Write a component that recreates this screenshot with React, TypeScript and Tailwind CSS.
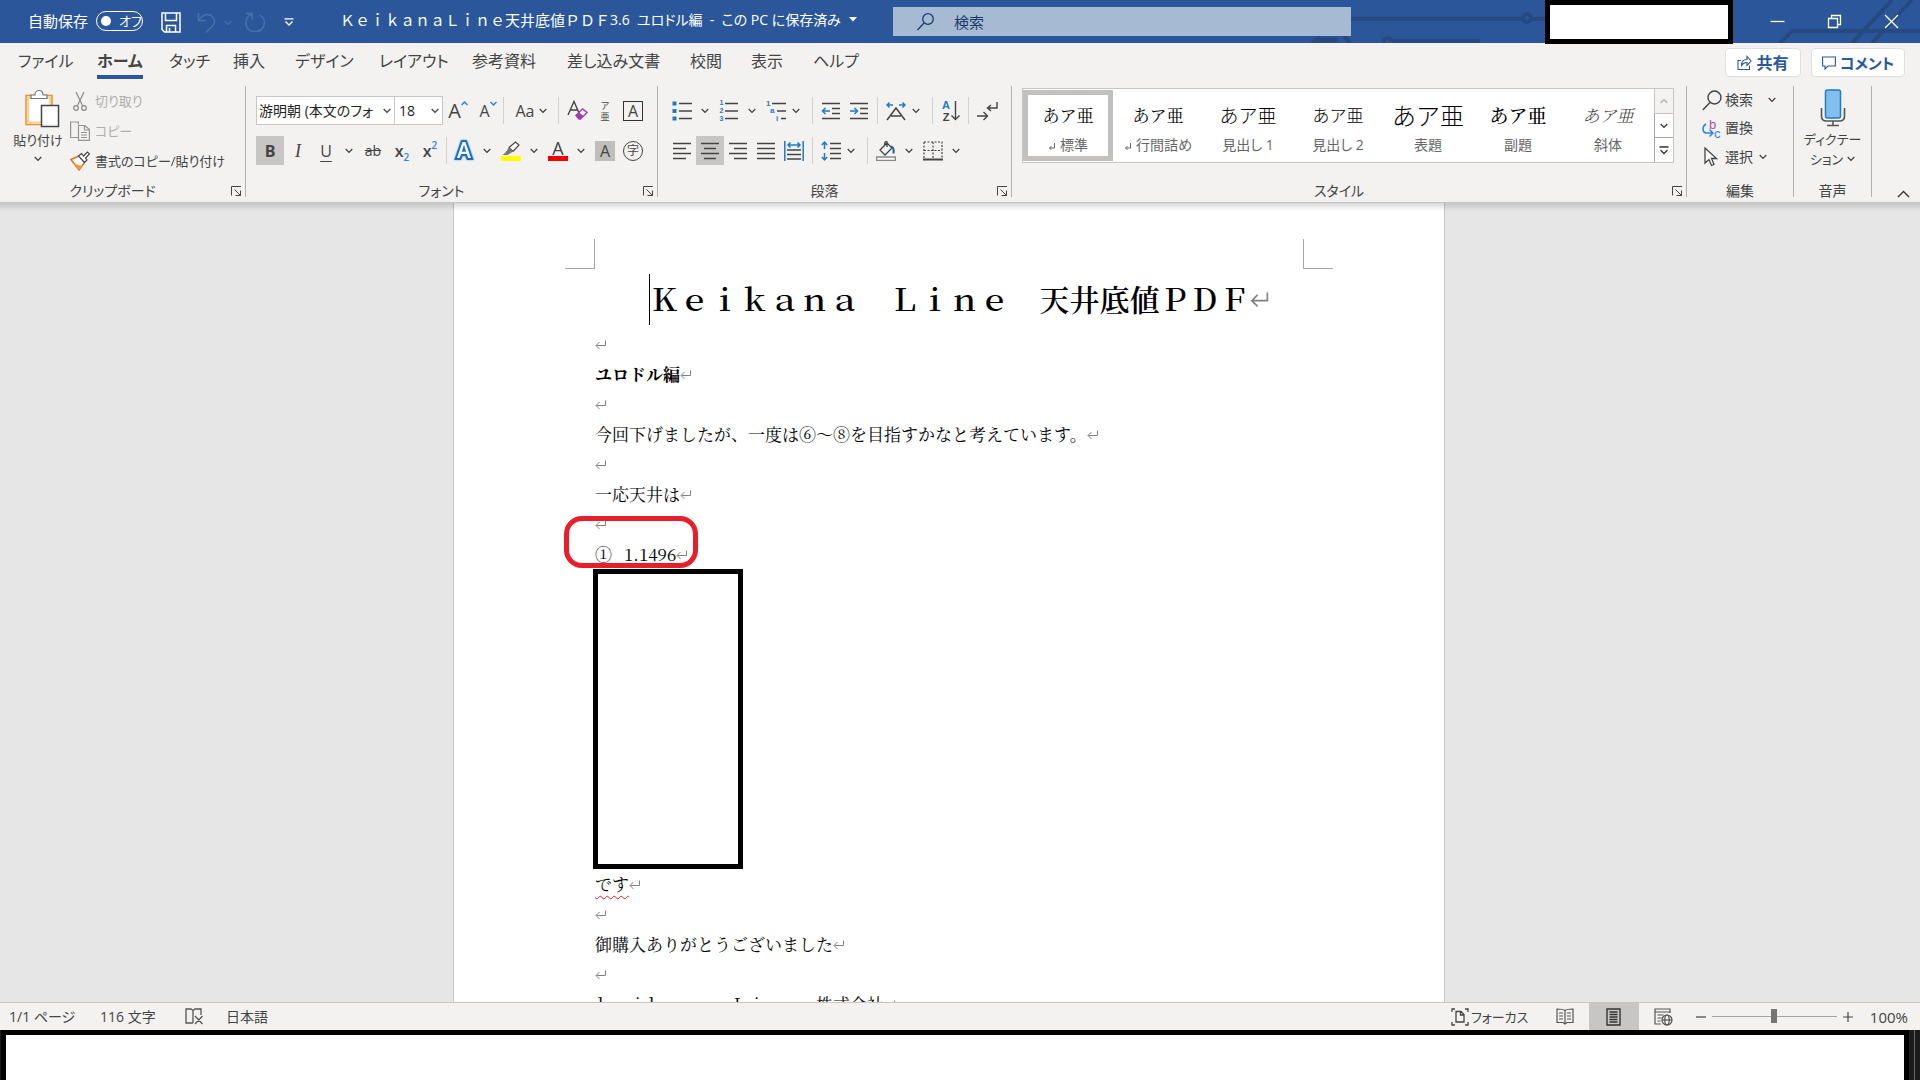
import React, { useState } from 'react';

const ui = "font-['Open_Sans','Noto_Sans_CJK_JP',sans-serif] [font-feature-settings:'palt']";
const mincho = "font-['Noto_Serif_CJK_JP','Liberation_Serif','Noto_Sans_CJK_JP',serif] [font-feature-settings:normal]";
const gothic = "font-['Noto_Sans_CJK_JP',sans-serif] [font-feature-settings:normal]";

const TABS = [
  { name: 'ファイル', width: 'w-[79px]' },
  { name: 'ホーム', width: 'w-[72px]' },
  { name: 'タッチ', width: 'w-[64px]' },
  { name: '挿入', width: 'w-[62px]' },
  { name: 'デザイン', width: 'w-[84px]' },
  { name: 'レイアウト', width: 'w-[93px]' },
  { name: '参考資料', width: 'w-[95px]' },
  { name: '差し込み文書', width: 'w-[123px]' },
  { name: '校閲', width: 'w-[61px]' },
  { name: '表示', width: 'w-[62px]' },
  { name: 'ヘルプ', width: 'w-[60px]' },
];

const STYLES = [
  { name: '標準', mark: true, sample: 'text-[17px] font-normal text-black', family: mincho },
  { name: '行間詰め', mark: true, sample: 'text-[17px] font-normal text-black', family: mincho },
  { name: '見出し 1', mark: false, sample: 'text-[19px] font-light text-black', family: gothic },
  { name: '見出し 2', mark: false, sample: 'text-[17px] font-light text-black', family: gothic },
  { name: '表題', mark: false, sample: 'text-2xl font-light text-black', family: gothic },
  { name: '副題', mark: false, sample: 'text-[19px] font-medium text-black', family: mincho },
  { name: '斜体', mark: false, sample: 'text-[17px] font-light italic text-[#404040]', family: mincho },
];

type BtnProps = { label: string; className?: string; active?: boolean; children: React.ReactNode };

function Btn({ label, className = 'w-7', active, children }: BtnProps) {
  return (
    <button
      type="button"
      aria-label={label}
      className={`h-[29px] shrink-0 flex items-center justify-center ${className} ${active ? 'bg-[#c8c6c4]' : 'hover:bg-[#e1dfdd]'}`}
    >
      {children}
    </button>
  );
}

function Chevron({ className = '' }: { className?: string }) {
  return (
    <svg className={`shrink-0 ${className}`} width="8" height="6" viewBox="0 0 8 6" fill="none" stroke="currentColor" strokeWidth="1.3">
      <path d="M.7 1 4 4.4 7.3 1" />
    </svg>
  );
}

function Drop({ label, className = 'w-[17px] mr-[2px]' }: { label: string; className?: string }) {
  return (
    <Btn label={label} className={className}>
      <Chevron />
    </Btn>
  );
}

function Sep({ className = 'mx-1' }: { className?: string }) {
  return <span className={`w-px h-[27px] shrink-0 bg-[#d2d0ce] ${className}`} />;
}

function Group({ name, width, launcher, children }: { name: string; width: string; launcher?: boolean; children: React.ReactNode }) {
  return (
    <>
      <section aria-label={name} className={`h-[116px] shrink-0 flex flex-col ${width}`}>
        <div className="flex-1 min-h-0">{children}</div>
        <div className="h-[22px] flex items-center">
          <span className="flex-1 text-center text-sm leading-5">{name}</span>
          {launcher && (
            <button type="button" aria-label={`${name}の設定`} className="w-5 h-5 flex items-center justify-start pl-[6px]">
              <svg width="11" height="11" viewBox="0 0 11 11" fill="none" stroke="#444" strokeWidth="1">
                <path d="M.5 9.500V.5H10M3.500 3.500 9.500 9.500M9.500 4.500v5h-5" />
              </svg>
            </button>
          )}
        </div>
      </section>
      <span className="w-px h-[111px] shrink-0 bg-[#b3b0ad]" />
    </>
  );
}

// 段落記号
function Mark({ big }: { big?: boolean }) {
  return (
    <svg className="shrink-0" width={big ? 20 : 12} height={big ? 18 : 11} viewBox="0 0 12 11" fill="none" stroke="#808080" strokeWidth="1">
      <path d="M10.500 1.500v5H1.500M4.500 3 1 6.500 4.500 10" />
    </svg>
  );
}

function Line({ children }: { children?: React.ReactNode }) {
  return (
    <p className="h-[30px] flex items-center whitespace-nowrap">
      {children}
      <Mark />
    </p>
  );
}

function Lines({ rows }: { rows: [number, number][] }) {
  return (
    <svg width="20" height="20" viewBox="0 0 20 20" stroke="#444" strokeWidth="1.500">
      {rows.map(([a, b], i) => (
        <path key={i} d={`M${a} ${2.5 + i * 5}H${b}`} />
      ))}
    </svg>
  );
}

function TitleBar() {
  const [autoSave, setAutoSave] = useState(false);

  return (
    <header className="relative h-[43px] shrink-0 flex items-center bg-[#2b579a] text-white">
      {/* 背景の回路模様 */}
      <svg className="absolute right-0 top-0" width="620" height="43" viewBox="0 0 620 43" fill="none" stroke="#26497f" strokeWidth="4">
        <path d="M50 19H222M232 19H260M92 41H180M12 43 20 37M50 43 44 36" />
        <circle cx="227" cy="18" r="4" />
        <path d="M14 40h24" strokeWidth="5" />
        <path d="M84 43c-2-6 6-6 8-2M480 43 492 31H620M552 43 592 0M572 43 612 0" />
      </svg>

      <div className="relative w-[340px] shrink-0 flex items-center pb-[2px] pl-7">
        <label className="flex items-center gap-2 text-[15px] leading-5 cursor-pointer">
          <span className="w-[60px] whitespace-nowrap">自動保存</span>
          <input type="checkbox" className="sr-only" checked={autoSave} onChange={() => setAutoSave(!autoSave)} />
          <span className="w-[47px] h-5 rounded-full border border-white flex items-center gap-2 pl-1 text-[13px] leading-4">
            <span className="w-[10px] h-[10px] rounded-full bg-white" />
            オフ
          </span>
        </label>
        <button type="button" aria-label="上書き保存" className="ml-[18px] mt-1">
          <svg width="20" height="21" viewBox="0 0 20 21" fill="none" stroke="#fff" strokeWidth="1.500">
            <path d="M1 1h18v19H3.500L1 17.500zM4.500 1v7.500h11V1M5.500 20v-6.500h9V20M8.500 16v4" />
          </svg>
        </button>
        <button type="button" aria-label="元に戻す" className="ml-4 mt-1 flex items-center gap-2 text-[#4a70ab]">
          <svg width="19" height="21" viewBox="0 0 19 21" fill="none" stroke="currentColor" strokeWidth="1.500">
            <path d="M1.500 1v7.500H9M1.500 8.500C5 3 10 1 14 3.500c5 3.500 4 8 1 11L9 20.500" />
          </svg>
          <Chevron />
        </button>
        <button type="button" aria-label="やり直し" className="ml-3 mt-1 text-[#4a70ab]">
          <svg width="22" height="21" viewBox="0 0 22 21" fill="none" stroke="currentColor" strokeWidth="1.500">
            <path d="M2 1.500h6v6M7.500 2C-1 6 0 19.500 11 19.500c10.500 0 12.500-12.500 4.500-16.500" />
          </svg>
        </button>
        <button type="button" aria-label="クイック アクセス ツール バーのユーザー設定" className="ml-[18px] mt-[2px]">
          <svg width="10" height="8" viewBox="0 0 10 8" fill="none" stroke="#fff" strokeWidth="1.300">
            <path d="M.5.8h9M1.500 3.500 5 7l3.500-3.500" />
          </svg>
        </button>
      </div>

      <button type="button" className="relative w-[553px] shrink-0 flex items-center gap-2 pb-1 text-[15px] leading-5 whitespace-nowrap">
        <span className="flex items-center">
          <span className="[font-feature-settings:normal]">ＫｅｉｋａｎａＬｉｎｅ天井底値ＰＤＦ</span>
          <span className="text-sm leading-5">3.6&nbsp; ユロドル編 &nbsp;-&nbsp; この PC に保存済み</span>
        </span>
        <svg width="8" height="5" viewBox="0 0 8 5" fill="#fff"><path d="M0 0h8L4 4.500z" /></svg>
      </button>

      <label className="relative w-[458px] h-[29px] flex items-center bg-[#a6bad4] pl-6 gap-5 text-[#1e3a6b]">
        <svg width="17" height="18" viewBox="0 0 17 18" fill="none" stroke="currentColor" strokeWidth="1.300">
          <circle cx="11" cy="6" r="5.300" />
          <path d="M7 10 .5 17" />
        </svg>
        <input type="search" aria-label="検索" placeholder="検索" className="flex-1 min-w-0 bg-transparent text-[15px] leading-5 outline-none placeholder:text-[#1e3a6b] placeholder:opacity-100" />
      </label>

      <div className="relative ml-auto h-full flex items-center">
        <div className="w-[188px] h-[44px] mr-4 self-start bg-white border-[5px] border-black" />
        <Win label="最小化"><path d="M.5 7.500h14" /></Win>
        <Win label="元に戻す (縮小)"><path d="M1.500 4.500h9v9h-9zM4.500 4V1.500h9v9H11" /></Win>
        <Win label="閉じる"><path d="m1 1 13 13M14 1 1 14" /></Win>
      </div>
    </header>
  );
}

function Win({ label, children }: { label: string; children: React.ReactNode }) {
  return (
    <button type="button" aria-label={label} className="w-[57px] h-[43px] flex items-center justify-center">
      <svg width="15" height="15" viewBox="0 0 15 15" fill="none" stroke="#fff" strokeWidth="1.300">{children}</svg>
    </button>
  );
}

function Tabs() {
  return (
    <nav className="h-[43px] shrink-0 flex items-start pl-[18px] pr-[15px]">
      <div className="flex text-base leading-6 text-[#444]">
        {TABS.map((t) => (
          <div key={t.name} className={t.width}>
            <button
              type="button"
              className={`mt-1 h-8 whitespace-nowrap border-b-4 ${t.name === 'ホーム' ? 'font-bold border-[#2b579a]' : 'border-transparent'}`}
            >
              {t.name}
            </button>
          </div>
        ))}
      </div>
      <div className="ml-auto mt-[5px] flex gap-[10px] text-base leading-5 font-bold text-[#2b579a]">
        <button type="button" className="h-[29px] w-[76px] flex items-center justify-center gap-1 bg-white border border-[#e1dfdd] rounded-sm">
          <svg width="15" height="15" viewBox="0 0 15 15" fill="none" stroke="currentColor" strokeWidth="1.100">
            <path d="M4 5.500H1v9h11.500v-4M4.500 10.500c0-4 2-6 5.500-6V1.500l4 4.500-4 4.500v-3c-3 0-4 .5-5.500 3z" />
          </svg>
          共有
        </button>
        <button type="button" className="h-[29px] w-[94px] flex items-center justify-center gap-1 bg-white border border-[#e1dfdd] rounded-sm text-[15px] whitespace-nowrap">
          <svg className="shrink-0" width="14" height="14" viewBox="0 0 14 14" fill="none" stroke="currentColor" strokeWidth="1.100">
            <path d="M.6 1h12.800v9H6l-3 3v-3H.6z" />
          </svg>
          コメント
        </button>
      </div>
    </nav>
  );
}

function Clipboard() {
  return (
    <Group name="クリップボード" width="w-[245px]" launcher>
      <div className="flex pl-[10px]">
        <button type="button" className="w-[56px] flex flex-col items-center pt-[3px] text-[13px] leading-5 whitespace-nowrap">
          <svg className="ml-[7px]" width="36" height="39" viewBox="0 0 36 39" fill="none">
            <path d="M2 6.500h26v29H2z" fill="#fff" stroke="#e8912d" strokeWidth="1.500" />
            <path d="M4 8.500h22v25H4z" stroke="#fbd38f" strokeWidth="2" />
            <path d="M7 9.500V6h4c0-6 8-6 8 0h4v3.500z" fill="#fff" stroke="#777" strokeWidth="1.200" />
            <path d="M17.500 16.500h17v21h-17z" fill="#fff" stroke="#444" strokeWidth="1.500" />
          </svg>
          <span className="mt-[2px]">貼り付け</span>
          <Chevron className="mt-[6px]" />
        </button>
        <div className="flex flex-col text-[13px] leading-5 pl-1">
          <button type="button" disabled className="h-[30px] flex items-center gap-[5px] text-[#b1afad]">
            <svg width="20" height="20" viewBox="0 0 20 20" fill="none" stroke="#8a8886" strokeWidth="1.200">
              <path d="M6 1l6.500 13.500M14 1 7.500 14.500" />
              <circle cx="6" cy="17" r="2.300" /><circle cx="14" cy="17" r="2.300" />
            </svg>
            切り取り
          </button>
          <button type="button" disabled className="h-[30px] flex items-center gap-[5px] text-[#b1afad]">
            <svg width="20" height="20" viewBox="0 0 20 20" fill="none" stroke="#979593" strokeWidth="1.200">
              <path d="M8 16.500H.6V1h7.800v2.500" />
              <path d="M8.500 4.500h6.500l4.400 4v10.900H8.500zM14.500 4.500V9h5M11 11.500h6M11 14h6M11 16.500h6" />
            </svg>
            コピー
          </button>
          <button type="button" className="h-[30px] flex items-center gap-[5px] whitespace-nowrap">
            <svg width="20" height="20" viewBox="0 0 20 20" fill="none">
              <path d="M1 8.500 9 5l5.500 6.500L9 19z" fill="#fff" stroke="#e07020" strokeWidth="1.500" />
              <path d="M4 12.500 12 15l-3 4z" fill="#f0a040" />
              <path d="m8.500 5 3-2.500 2 2.500 4-4 2 2-4 4 1.500 2-2.500 2.500z" fill="#fff" stroke="#444" strokeWidth="1.200" />
            </svg>
            書式のコピー/貼り付け
          </button>
        </div>
      </div>
    </Group>
  );
}

function FontGroup() {
  return (
    <Group name="フォント" width="w-[411px]" launcher>
      <div className="flex flex-col gap-[11px] pl-[10px] pt-[10px]">
        <div className="h-[29px] flex items-center">
          <div className="relative w-[139px]">
            <select aria-label="フォント名" className="w-full h-[29px] appearance-none bg-white border border-[#c8c6c4] pl-[2px] pr-4 text-[14px] text-[#252423]">
              <option>游明朝 (本文のフォ</option>
            </select>
            <Chevron className="absolute right-1 top-3 pointer-events-none" />
          </div>
          <div className="relative w-[49px] -ml-px">
            <select aria-label="フォント サイズ" className="w-full h-[29px] appearance-none bg-white border border-[#c8c6c4] pl-1 pr-4 text-[14px] text-[#252423]">
              <option>18</option>
            </select>
            <Chevron className="absolute right-1 top-3 pointer-events-none" />
          </div>
          <Btn label="フォント サイズの拡大" className="w-[30px]">
            <span className="text-xl leading-5">A</span>
            <svg className="self-start mt-[5px]" width="7" height="5" viewBox="0 0 7 5" fill="none" stroke="#2b88d8" strokeWidth="1.500"><path d="M.5 4 3.500 1l3 3" /></svg>
          </Btn>
          <Btn label="フォント サイズの縮小" className="w-[30px]">
            <span className="text-base leading-5">A</span>
            <svg className="self-start mt-[5px]" width="7" height="5" viewBox="0 0 7 5" fill="none" stroke="#2b88d8" strokeWidth="1.500"><path d="M.5 1l3 3 3-3" /></svg>
          </Btn>
          <Sep className="" />
          <Btn label="文字種の変換" className="w-[54px] gap-1">
            <span className="text-base leading-5">Aa</span>
            <Chevron />
          </Btn>
          <Sep className="mr-1" />
          <Btn label="すべての書式をクリア">
            <svg width="21" height="21" viewBox="0 0 21 21" fill="none">
              <path d="M1 15 7 1.500 12 13M3.500 10h7" stroke="#444" strokeWidth="1.400" />
              <path d="m9 15.500 6.500-6.500 4.500 3.500-6.500 6.500H12z" fill="#fff" stroke="#9a3fb0" strokeWidth="1.500" />
              <path d="m9 15.500 3-3 4.500 3.500-3 3H12z" fill="#9a3fb0" />
            </svg>
          </Btn>
          <Btn label="ルビ">
            <span className="flex flex-col items-center text-[9px] leading-[11px]"><span>ア</span><span>亜</span></span>
          </Btn>
          <Btn label="囲み線">
            <span className="w-5 h-5 border border-[#333] text-base leading-[18px] text-center">A</span>
          </Btn>
        </div>
        <div className="h-[29px] flex items-center">
          <Btn label="太字" active><span className="text-base leading-5 font-bold">B</span></Btn>
          <Btn label="斜体"><span className="text-lg leading-5 italic font-['Liberation_Serif',serif]">I</span></Btn>
          <Btn label="下線"><span className="text-base leading-5 underline underline-offset-4">U</span></Btn>
          <Drop label="下線の種類" />
          <Btn label="取り消し線"><span className="text-sm leading-5 line-through">ab</span></Btn>
          <Btn label="下付き" className="w-[30px]"><span className="text-base leading-5 font-semibold">x</span><span className="text-[10px] leading-3 mt-3 text-[#2b88d8] font-semibold">2</span></Btn>
          <Btn label="上付き" className="w-[26px]"><span className="text-base leading-5 font-semibold">x</span><span className="text-[10px] leading-3 mb-3 text-[#2b88d8] font-semibold">2</span></Btn>
          <Sep className="mx-[3px]" />
          <Btn label="文字の効果と体裁">
            <svg className="overflow-visible drop-shadow-[0_0_1px_#5ab0f0]" width="20" height="20" viewBox="0 0 20 20">
              <text x="10" y="17" textAnchor="middle" fontSize="21" fontWeight="600" fill="#fff" stroke="#1c6fbd" strokeWidth="4" paintOrder="stroke">A</text>
            </svg>
          </Btn>
          <Drop label="文字の効果" />
          <Btn label="蛍光ペンの色">
            <svg width="20" height="20" viewBox="0 0 20 20" fill="none">
              <path d="m8 6.500 6.500-5.500 3.500 3-6 6.500z" fill="#fff" stroke="#444" strokeWidth="1.200" />
              <path d="M8 6.500 4 12l-2.500 2h5L12 10.500z" fill="#777" />
              <path d="M0 15h20v5H0z" fill="#ff0" />
            </svg>
          </Btn>
          <Drop label="蛍光ペンの色の一覧" />
          <Btn label="フォントの色">
            <span className="w-5 h-5 border-b-[5px] border-[#f00000] text-lg leading-[14px] text-center">A</span>
          </Btn>
          <Drop label="フォントの色の一覧" />
          <Btn label="文字の網かけ"><span className="w-5 h-5 bg-[#c0bebc] text-base leading-5 text-center">A</span></Btn>
          <Btn label="囲い文字"><span className="w-5 h-5 rounded-full border border-[#444] text-xs leading-[18px] text-center">字</span></Btn>
        </div>
      </div>
    </Group>
  );
}

function ParagraphGroup() {
  return (
    <Group name="段落" width="w-[353px]" launcher>
      <div className="flex flex-col gap-[11px] pl-[10px] pt-[10px]">
        <div className="h-[29px] flex items-center">
          <Btn label="箇条書き">
            <svg width="20" height="20" viewBox="0 0 20 20" stroke="#444" strokeWidth="1.500">
              <path d="M7 2.500h13M7 10h13M7 17.500h13" />
              <path d="M.5 2.500h4M.5 10h4M.5 17.500h4" stroke="#1e7bc4" strokeWidth="4" />
            </svg>
          </Btn>
          <Drop label="行頭文字" />
          <Btn label="段落番号">
            <span className="flex flex-col font-['Liberation_Sans',sans-serif] text-[7px] leading-[8px] font-bold text-[#1e7bc4]"><span>1</span><span>2</span><span>3</span></span>
            <svg width="15" height="20" viewBox="0 0 15 20" stroke="#444" strokeWidth="1.500"><path d="M2 2.500h13M2 10h13M2 17.500h13" /></svg>
          </Btn>
          <Drop label="番号書式" />
          <Btn label="アウトライン">
            <svg className="overflow-visible" width="20" height="24" viewBox="0 -2 20 24">
              <path d="M6 2.500h14M11 10h9M15 17.500h5" stroke="#444" strokeWidth="1.500" />
              <g className="font-['Liberation_Sans',sans-serif]" fill="#1e7bc4" fontSize="8" fontWeight="700"><text x="0" y="5">1</text><text x="4" y="12">a</text><text x="10" y="20">i</text></g>
            </svg>
          </Btn>
          <Drop label="リスト ライブラリ" className="w-[11px]" />
          <Sep className="ml-[11px] mr-1" />
          <Btn label="インデントを減らす">
            <svg width="20" height="20" viewBox="0 0 20 20" fill="none" stroke="#444" strokeWidth="1.500">
              <path d="M1 2.500h18M11 7.500h8M11 12.500h8M1 17.500h18" />
              <path d="M9 10H2M4.500 7 1.500 10l3 3" stroke="#1e7bc4" />
            </svg>
          </Btn>
          <Btn label="インデントを増やす">
            <svg width="20" height="20" viewBox="0 0 20 20" fill="none" stroke="#444" strokeWidth="1.500">
              <path d="M1 2.500h18M11 7.500h8M11 12.500h8M1 17.500h18" />
              <path d="M1 10h7M5.500 7l3 3-3 3" stroke="#1e7bc4" />
            </svg>
          </Btn>
          <Sep />
          <Btn label="拡張書式">
            <svg width="20" height="20" viewBox="0 0 20 20" fill="none" stroke="#444" strokeWidth="1.500">
              <path d="M1 19 10 7l9 12M5 15h10" />
              <path d="M7 4H1M3.500 1.500 1 4l2.500 2.500M13 4h6M16.500 1.500 19 4l-2.500 2.500" stroke="#1e7bc4" />
            </svg>
          </Btn>
          <Drop label="拡張書式の一覧" className="w-[11px]" />
          <Sep className="ml-[11px] mr-1" />
          <Btn label="並べ替え">
            <span className="flex flex-col font-['Liberation_Sans',sans-serif] text-[11px] leading-[12px] font-bold"><span className="text-[#1e7bc4]">A</span><span>Z</span></span>
            <svg width="10" height="20" viewBox="0 0 10 20" fill="none" stroke="#444" strokeWidth="1.400"><path d="M5.500 0v18.500M1.500 14.500l4 4 4-4" /></svg>
          </Btn>
          <Sep className="ml-[3px] mr-1" />
          <Btn label="編集記号の表示">
            <svg width="21" height="20" viewBox="0 0 21 20" fill="none" stroke="#444" strokeWidth="1.400">
              <path d="M20 1v6h-9M14 4l-3.500 3 3.500 3M0 15h10M6.500 11l4 4-4 4" />
            </svg>
          </Btn>
        </div>
        <div className="h-[29px] flex items-center">
          <Btn label="左揃え"><Lines rows={[[1, 19], [1, 14], [1, 19], [1, 14]]} /></Btn>
          <Btn label="中央揃え" active><Lines rows={[[1, 19], [4, 16], [1, 19], [4, 16]]} /></Btn>
          <Btn label="右揃え"><Lines rows={[[1, 19], [6, 19], [1, 19], [6, 19]]} /></Btn>
          <Btn label="両端揃え"><Lines rows={[[1, 19], [1, 19], [1, 19], [1, 19]]} /></Btn>
          <Btn label="均等割り付け">
            <svg width="20" height="20" viewBox="0 0 20 20" fill="none" stroke="#444" strokeWidth="1.500">
              <path d="M3 9h14M3 13.500h14M3 18h14" />
              <path d="M.8 0v20M19.200 0v20M4 4h12M6.500 1.500 4 4l2.500 2.500M13.500 1.500 16 4l-2.500 2.500" stroke="#1e7bc4" />
            </svg>
          </Btn>
          <Sep />
          <Btn label="行と段落の間隔">
            <svg width="20" height="20" viewBox="0 0 20 20" fill="none" stroke="#444" strokeWidth="1.500">
              <path d="M9 2.500h11M9 7.500h11M9 12.500h11M9 17.500h11" />
              <path d="M3.500 1v7M.8 4 3.500 1.200 6.200 4M3.500 12v7M.8 16l2.700 2.800L6.200 16" stroke="#1e7bc4" />
            </svg>
          </Btn>
          <Drop label="間隔の一覧" className="w-[11px]" />
          <Sep className="ml-[11px] mr-1" />
          <Btn label="塗りつぶし">
            <svg width="20" height="20" viewBox="0 0 20 20" fill="none" stroke="#444" strokeWidth="1.300">
              <path d="m4 9 7-7 5 5-7 7zM11 6V.8C10 0 8.500 1 8.500 4" />
              <path d="M14.500 5.500c3 0 3.500 3 3 7" stroke="#1e5fa8" strokeWidth="2" />
              <path d="M.6 16h18.800v3.400H.6z" fill="#fff" stroke="#888" />
            </svg>
          </Btn>
          <Drop label="塗りつぶしの一覧" />
          <Btn label="罫線">
            <svg width="20" height="20" viewBox="0 0 20 20" fill="none" stroke="#444" strokeWidth="1.200">
              <path d="M1 1h18v16M1 1v16M10 1v16M1 9.500h18" strokeDasharray="2 1.500" />
              <path d="M0 18.500h20" strokeWidth="2" />
            </svg>
          </Btn>
          <Drop label="罫線の一覧" />
        </div>
      </div>
    </Group>
  );
}

function StylesGroup() {
  return (
    <Group name="スタイル" width="w-[674px]" launcher>
      <div className="pl-[10px] pt-[2px]">
        <div className="w-[652px] h-[75px] flex bg-white border border-[#c8c6c4]">
          {STYLES.map((s, i) => (
            <button
              key={s.name}
              type="button"
              className={`w-[90px] h-[71px] mt-px shrink-0 border-[5px] flex flex-col items-center ${i === 0 ? 'border-[#c3c1bf]' : 'border-transparent'}`}
            >
              <span className={`h-10 flex items-center whitespace-nowrap ${s.family} ${s.sample}`}>あア亜</span>
              <span className="text-sm leading-5 whitespace-nowrap text-[#666] flex items-center gap-1">
                {s.mark && (
                  <svg className="mt-1" width="8" height="8" viewBox="0 0 8 8" fill="none" stroke="#666"><path d="M6.500 0v5H1.500M3.500 3l-2 2 2 2" /></svg>
                )}
                {s.name}
              </span>
            </button>
          ))}
          <div className="ml-auto w-[19px] flex flex-col text-[#333]">
            <button type="button" aria-label="前の行" disabled className="flex-1 flex items-center justify-center border-l border-b border-[#c8c6c4] bg-[#f3f2f1] text-[#b1afad]">
              <Chevron className="rotate-180" />
            </button>
            <button type="button" aria-label="次の行" className="flex-1 flex items-center justify-center border-l border-b border-[#a6a4a2]"><Chevron /></button>
            <button type="button" aria-label="その他のスタイル" className="flex-1 flex items-center justify-center border-l border-[#a6a4a2]">
              <svg width="10" height="9" viewBox="0 0 10 9" fill="none" stroke="currentColor" strokeWidth="1.300"><path d="M.5 1h9M1.500 4 5 7.500 8.500 4" /></svg>
            </button>
          </div>
        </div>
      </div>
    </Group>
  );
}

function EditGroup() {
  return (
    <Group name="編集" width="w-[106px]">
      <div className="flex flex-col pl-[15px] text-sm leading-5">
        <button type="button" className="h-7 flex items-center gap-[3px]">
          <svg width="20" height="21" viewBox="0 0 20 21" fill="none" stroke="#444" strokeWidth="1.400"><circle cx="12.500" cy="7.500" r="6.500" /><path d="M8 12.500.8 20" /></svg>
          検索
          <Chevron className="ml-3" />
        </button>
        <button type="button" className="h-7 flex items-center gap-[3px]">
          <svg className="overflow-visible font-['Liberation_Sans',sans-serif]" width="20" height="21" viewBox="0 0 20 21" fill="none">
            <text x="7" y="11" fontSize="13" fill="#a34fb8">b</text>
            <text x="12" y="20" fontSize="13" fill="#2b88d8">c</text>
            <path d="M4 6C0 8 0 14 4 15h6M7.500 11.500 11 15l-3.500 3.500" stroke="#2b88d8" strokeWidth="1.500" />
          </svg>
          置換
        </button>
        <button type="button" className="h-[30px] flex items-center gap-[3px]">
          <svg width="20" height="20" viewBox="0 0 20 20" fill="#fff" stroke="#444" strokeWidth="1.300"><path d="M3 1v15l4-3.500 2.500 6 2.500-1-2.500-6h5z" /></svg>
          選択
          <Chevron className="ml-[3px]" />
        </button>
      </div>
    </Group>
  );
}

function VoiceGroup() {
  return (
    <Group name="音声" width="w-[77px]">
      <button type="button" className="w-full flex flex-col items-center pt-[3px] text-[13px] leading-5 whitespace-nowrap">
        <svg width="26" height="38" viewBox="0 0 26 38" fill="none">
          <rect x="5.500" y="1" width="15" height="28" rx="2" fill="#83beec" stroke="#1e7bc4" strokeWidth="1.500" />
          <path d="M1.500 19v8q0 5 5 5h13q5 0 5-5v-8M13 32v4M7 36.500h12" stroke="#555" strokeWidth="1.600" />
        </svg>
        <span className="mt-[2px]">ディクテー</span>
        <span className="flex items-center gap-1">ション <Chevron /></span>
      </button>
    </Group>
  );
}

function Document() {
  return (
    <main className="relative flex-1 min-h-0 overflow-hidden flex justify-center bg-[#e6e6e6] pr-[22px]">
      <div className="absolute inset-x-0 top-0 h-2 bg-linear-to-b from-black/15 to-transparent" />
      <article className={`w-[992px] h-max shrink-0 bg-white border-x border-[#c6c6c6] text-[17px] leading-[30px] text-black ${mincho}`}>
        <div className="flex justify-between px-[111px] pt-9">
          <span className="w-[30px] h-[30px] border-r border-b border-[#a6a6a6]" />
          <span className="w-[30px] h-[30px] border-l border-b border-[#a6a6a6]" />
        </div>
        <div className="px-[141px]">
          <h1 className="h-[60px] flex items-center justify-center pl-5 text-[30px] font-semibold whitespace-nowrap">
            <span className="w-px h-[51px] bg-black" />
            <span className="pb-[3px]">Ｋｅｉｋａｎａ　Ｌｉｎｅ　天井底値ＰＤＦ</span>
            <Mark big />
          </h1>
          <Line />
          <Line><b>ユロドル編</b></Line>
          <Line />
          <Line>今回下げましたが、一度は⑥～⑧を目指すかなと考えています。</Line>
          <Line />
          <Line>一応天井は</Line>
          <div className="relative">
            <Line />
            <Line><span className="mr-3">①</span>1.1496</Line>
            <span className="absolute -left-[31px] top-[7px] w-[134px] h-[52px] border-[5px] border-[#e81e28] rounded-[18px]" />
          </div>
          <div className="-ml-[2px] w-[150px] h-[300px] border-[5px] border-black" />
          <Line><span className="underline decoration-wavy decoration-[#e02020] decoration-1 underline-offset-4">です</span></Line>
          <Line />
          <Line>御購入ありがとうございました</Line>
          <Line />
          <Line>ｋｅｉｋａｎａ　Ｌｉｎｅ　株式会社</Line>
        </div>
      </article>
    </main>
  );
}

function StatusBar() {
  const [zoom, setZoom] = useState(50);

  return (
    <footer className="h-7 shrink-0 flex items-center border-t border-[#c6c6c6] bg-[#f3f2f1] pl-[9px] pr-3 text-sm leading-5 text-[#444] whitespace-nowrap">
      <button type="button" className="w-[91px] text-left">1/1 ページ</button>
      <button type="button" className="w-[85px] text-left">116 文字</button>
      <button type="button" aria-label="文章校正" className="w-[41px]">
        <svg width="19" height="17" viewBox="0 0 19 17" fill="none" stroke="#555" strokeWidth="1.300">
          <path d="M8 15H1V1h5l2 1.500L10 1h6v6M8 2.500V15M10 8l7.500 8M17.500 8 10 16" />
        </svg>
      </button>
      <button type="button">日本語</button>

      <div className="ml-auto h-full flex items-center">
        <button type="button" className="flex items-center gap-[2px] w-[91px] text-[13px]">
          <svg width="18" height="18" viewBox="0 0 18 18" fill="none" stroke="#444" strokeWidth="1.300">
            <path d="M4 1H1v3M14 1h3v3M4 17H1v-3M14 17h3v-3M5 3.500h5l3 3V14H5zM9.500 3.500V7H13" />
          </svg>
          フォーカス
        </button>
        <button type="button" aria-label="閲覧モード" className="w-[47px] h-full flex items-center justify-center">
          <svg width="18" height="17" viewBox="0 0 18 17" fill="none" stroke="#555" strokeWidth="1.200">
            <path d="M9 2.500C7 1 4 1 1 1v13.500h6l2 1.500 2-1.500h6V1c-3 0-6 0-8 1.500zV16M3 5h4M3 8h4M3 11h4M11 5h4M11 8h4M11 11h4" />
          </svg>
        </button>
        <button type="button" aria-label="印刷レイアウト" className="w-[50px] h-full flex items-center justify-center bg-[#c8c6c4]">
          <svg width="15" height="18" viewBox="0 0 15 18" fill="none" stroke="#333" strokeWidth="1.400">
            <path d="M1 1h13v16H1zM3.500 4h8M3.500 6.500h8M3.500 9h8M3.500 11.500h8M3.500 14h8" />
          </svg>
        </button>
        <button type="button" aria-label="Web レイアウト" className="w-[50px] h-full flex items-center justify-center">
          <svg width="19" height="18" viewBox="0 0 19 18" fill="none" stroke="#555" strokeWidth="1.200">
            <path d="M7 16H1V1h15v4M1 4h15M3.500 7h6M3.500 10h4M3.500 13h3" />
            <circle cx="13" cy="12" r="5" /><ellipse cx="13" cy="12" rx="2.200" ry="5" /><path d="M8 12h10" />
          </svg>
        </button>
        <button type="button" aria-label="縮小" className="w-[23px] flex justify-end pr-[6px]">
          <svg width="10" height="10" viewBox="0 0 10 10" stroke="#444" strokeWidth="1.200"><path d="M0 5h10" /></svg>
        </button>
        <input
          type="range"
          aria-label="ズーム"
          min={0}
          max={100}
          value={zoom}
          onChange={(e) => setZoom(Number(e.target.value))}
          className="w-[125px] h-[14px] appearance-none bg-transparent [&::-webkit-slider-runnable-track]:h-px [&::-webkit-slider-runnable-track]:bg-[#a6a4a2] [&::-webkit-slider-thumb]:appearance-none [&::-webkit-slider-thumb]:w-[6px] [&::-webkit-slider-thumb]:h-[14px] [&::-webkit-slider-thumb]:-mt-[7px] [&::-webkit-slider-thumb]:bg-[#777573]"
        />
        <button type="button" aria-label="拡大" className="w-[33px] flex pl-[6px]">
          <svg width="10" height="10" viewBox="0 0 10 10" stroke="#444" strokeWidth="1.200"><path d="M0 5h10M5 0v10" /></svg>
        </button>
        <button type="button" className="text-[15px]">100%</button>
      </div>
    </footer>
  );
}

export default function App() {
  return (
    <div className={`h-screen flex flex-col overflow-hidden bg-[#f3f2f1] text-[#444] ${ui}`}>
      <TitleBar />
      <Tabs />

      {/* リボン */}
      <div className="flex shrink-0 border-b border-[#c8c6c4]">
        <Clipboard />
        <FontGroup />
        <ParagraphGroup />
        <StylesGroup />
        <EditGroup />
        <VoiceGroup />
        <button type="button" aria-label="リボンを折りたたむ" className="ml-auto self-end mr-[10px] mb-1">
          <svg width="13" height="8" viewBox="0 0 13 8" fill="none" stroke="#333" strokeWidth="1.400"><path d="m1 7 5.500-5.500L12 7" /></svg>
        </button>
      </div>

      <Document />
      <StatusBar />

      {/* タスクバー */}
      <div className="h-[50px] shrink-0 flex bg-[#1c1c1c] pl-px">
        <div className="flex-1 bg-white border-5 border-b-0 border-black" />
        <span className="w-[5px]" />
        <span className="w-px mr-[5px] bg-[#666]" />
      </div>
    </div>
  );
}
